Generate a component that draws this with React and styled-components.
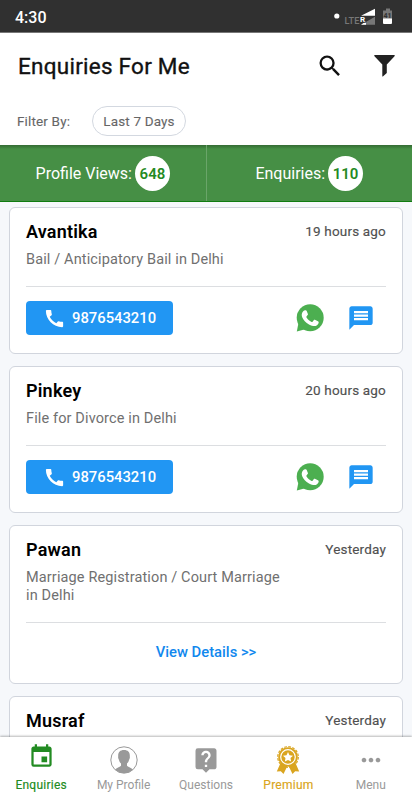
import React from 'react';
import styled, { createGlobalStyle } from 'styled-components';
import { MdCall, MdEvent, MdLiveHelp, MdMessage, MdMoreHoriz, MdSearch } from 'react-icons/md';

const GlobalStyle = createGlobalStyle`
  * { box-sizing: border-box; }
  body {
    margin: 0;
    font-family: Roboto, sans-serif;
    background: #f6f8fb;
  }
  svg { display: block; flex: none; }
`;

const Screen = styled.div`
  display: flex;
  flex-direction: column;
  width: 412px;
  height: 800px;
  overflow: hidden;
`;

const StatusBar = styled.div`
  flex: none;
  display: flex;
  align-items: center;
  justify-content: space-between;
  height: 33px;
  padding: 2px 18px 0 15px;
  background: #303030;
  border-bottom: 1px solid #777;
`;

const Clock = styled.span`
  color: #fff;
  font-size: 16px;
  font-weight: 500;
`;

const Header = styled.header`
  flex: none;
  height: 112px;
  background: #fff;
`;

const TitleRow = styled.div`
  display: flex;
  align-items: center;
  height: 66px;
  padding: 0 17px 0 18px;
`;

const Title = styled.h1`
  flex: 1;
  margin: 0;
  color: #111;
  font-size: 22.5px;
  font-weight: 400;
  letter-spacing: 0.25px;
  -webkit-text-stroke: 0.35px #111;
`;

const HeaderIcons = styled.div`
  display: flex;
  align-items: center;
  gap: 30px;
`;

const FilterRow = styled.div`
  display: flex;
  align-items: center;
  gap: 20px;
  height: 30px;
  margin-top: 7px;
  padding-left: 17px;
  color: #666;
  font-size: 13.5px;
  letter-spacing: 0.15px;
  -webkit-text-stroke: 0.1px #666;
`;

const FilterLabel = styled.span`
  width: 55px;
  white-space: nowrap;
`;

const Chip = styled.span`
  display: flex;
  align-items: center;
  justify-content: center;
  width: 94px;
  height: 30px;
  border: 1px solid #d3d8e0;
  border-radius: 15px;
`;

const Counters = styled.div`
  flex: none;
  display: flex;
  height: 57px;
  background: linear-gradient(#356b34, #3c7d3b 2px, #468f45 4px);
  border-bottom: 1px solid #107c10;
`;

const Counter = styled.div`
  flex: 1;
  display: flex;
  align-items: center;
  justify-content: center;
  gap: 3px;
  padding-top: 1px;
  color: #fff;
  font-size: 16px;

  &:first-child { border-right: 1px solid #6aa569; }
`;

const Count = styled.span`
  display: flex;
  align-items: center;
  justify-content: center;
  width: 35px;
  height: 35px;
  padding-top: 1px;
  border-radius: 50%;
  background: #fff;
  color: #248a24;
  font-size: 15px;
  font-weight: 600;
`;

const List = styled.main`
  flex: 1;
  display: flex;
  flex-direction: column;
  gap: 12px;
  min-height: 0;
  padding: 5px 9px 0;
  overflow: hidden;
`;

const Card = styled.article`
  flex: none;
  min-height: 147px;
  padding: 12px 16px 0;
  background: #fff;
  border: 1px solid #d1d5dd;
  border-radius: 6px;
`;

const CardHead = styled.div`
  display: flex;
  align-items: center;
  justify-content: space-between;
  height: 22px;
`;

const Name = styled.h2`
  margin: 0;
  color: #000;
  font-size: 18px;
  font-weight: 600;
  letter-spacing: 0.2px;
`;

const Time = styled.span`
  color: #505050;
  font-size: 13.5px;
  letter-spacing: 0.18px;
  -webkit-text-stroke: 0.15px #505050;
`;

const Topic = styled.p`
  width: 264px;
  margin: 9px 0 0;
  padding-bottom: 17.5px;
  color: #707070;
  font-size: 14.5px;
  letter-spacing: 0.13px;
  line-height: 17.5px;
`;

const Actions = styled.div`
  display: flex;
  align-items: center;
  height: ${(props) => (props.$details ? '61.5px' : '67px')};
  padding-bottom: ${(props) => (props.$details ? '2px' : '4px')};
  padding-right: ${(props) => (props.$details ? '0' : '11.5px')};
  justify-content: ${(props) => (props.$details ? 'center' : 'flex-start')};
  border-top: 1px solid #dcdee1;
`;

const CallButton = styled.button`
  display: flex;
  align-items: center;
  gap: 6px;
  width: 147px;
  height: 34px;
  margin-right: auto;
  padding: 0 0 0 17px;
  border: 0;
  border-radius: 4px;
  background: #2196f3;
  color: #fff;
  font-family: inherit;
  font-size: 14.8px;
  font-weight: 500;
`;

const Shortcuts = styled.div`
  display: flex;
  align-items: center;
  gap: 23px;
`;

const DetailsLink = styled.a`
  color: #1188ee;
  font-size: 14.8px;
  font-weight: 500;
`;

const TabBar = styled.nav`
  flex: none;
  display: flex;
  height: 63px;
  background: #fff;
  box-shadow: 0 -1px 2px rgba(0, 0, 0, 0.28);
  z-index: 1;
`;

const Tab = styled.div`
  flex: 1;
  display: flex;
  flex-direction: column;
  align-items: center;
  color: ${(props) => props.$color || '#999'};
  font-size: 12px;
  line-height: 16px;
  letter-spacing: ${(props) => (props.$color ? '0.25px' : '0')};
  -webkit-text-stroke: ${(props) => (props.$color ? '0.15px' : '0')};
`;

const TabIcon = styled.div`
  display: flex;
  align-items: center;
  justify-content: center;
  height: 40px;
  padding-top: ${(props) => (props.$raised ? 0 : 5)}px;
  padding-bottom: ${(props) => (props.$raised ? 1 : 0)}px;
`;

const enquiries = [
  { name: 'Avantika', topic: 'Bail / Anticipatory Bail in Delhi', time: '19 hours ago', phone: '9876543210' },
  { name: 'Pinkey', topic: 'File for Divorce in Delhi', time: '20 hours ago', phone: '9876543210' },
  { name: 'Pawan', topic: 'Marriage Registration / Court Marriage in Delhi', time: 'Yesterday', details: true },
  { name: 'Musraf', time: 'Yesterday' },
];

const StatusIcons = () => (
  <svg width="62" height="20" viewBox="0 0 62 20">
    <circle cx="4.8" cy="9" r="2.6" fill="#fff" />
    <text x="12.5" y="17.3" fontSize="9.2" fontWeight="500" letterSpacing="0.2" fill="#777">LTE</text>
    <path d="M29 8.7 43 1.7v7z" fill="#fff" />
    <path d="M29 17.7 43 9.7v8z" fill="#777" />
    <path d="M29 17.7 34 14.2v3.5z" fill="#fff" />
    <text x="28" y="15.2" fontSize="8" fontWeight="700" fill="#fff" stroke="#303030" strokeWidth="1.6" paintOrder="stroke">R</text>
    <path d="M54 1.5h4v2h2v9h-9v-9h3z" fill="#777" />
    <path d="M51 11.5h9V16q0 1-1 1h-7q-1 0-1-1z" fill="#fff" />
    <text x="51.6" y="11.3" fontSize="7" fontWeight="700" fill="#303030">41</text>
  </svg>
);

const FunnelIcon = () => (
  <svg width="21" height="22" viewBox="0 0 22 22" preserveAspectRatio="none" fill="#222">
    <path d="M0.5 0h21q.5.5 0 1.2L13.4 9.6V18L9.3 21.5q-.6.3-.6-.5V9.6L.5 1.2Q0 .5.5 0z" />
  </svg>
);

const WhatsappIcon = () => (
  <svg width="28" height="28" viewBox="0 0 28 28">
    <circle cx="14.2" cy="13.8" r="13.5" fill="#4caf50" />
    <path d="M2.5 19 .8 27.6l8.4-2.4z" fill="#4caf50" />
    <path
      d="M9.3 6.3c.7-.1 1.1 0 1.4.7l1.2 2.9c.2.5 0 .9-.3 1.2l-1.1 1.3c-.3.3-.3.6-.1.9 1.2 2.1 2.9 3.6 5.2 4.6.4.2.7.1 1-.2l1.3-1.6c.3-.4.6-.4 1-.3l3 1.4c.6.3.8.5.8.8 0 1.7-1 3.3-3 3.9-1.7.5-4-.1-6.7-1.4-3.2-1.6-5.7-4.6-6.8-7.2-.8-2-.6-4.3.8-5.9.7-.8 1.4-1.1 2.3-1.1z"
      fill="#fff"
    />
  </svg>
);

const ProfileIcon = () => (
  <svg width="28" height="28" viewBox="0 0 28 28">
    <circle cx="14" cy="14" r="13.2" fill="none" stroke="#999" strokeWidth="1" />
    <path
      d="M14 4c-4 0-6 2.4-5.8 6 0 1-.4 1.8.6 3.5.5 2 1.2 3 2.2 4v2.3c-.7 1.3-3.8 1.7-6 3.6A13 13 0 0 0 14 27a13 13 0 0 0 9-3.6c-2.2-1.9-5.3-2.3-6-3.6v-2.3c1-1 1.7-2 2.2-4 1-1.7.6-2.5.6-3.5C20 6.4 18 4 14 4z"
      fill="#999"
    />
  </svg>
);

const PremiumIcon = () => (
  <svg width="24" height="28" viewBox="0 0 24 28">
    <path d="M4.5 17 .8 25.5l4-.3L7.5 28 11.4 20h1.2l3.9 8 2.7-2.8 4 .3-3.7-8.5z" fill="#daa520" />
    <circle cx="12" cy="11" r="9.8" fill="#daa520" />
    <circle cx="12" cy="11" r="10.3" fill="none" stroke="#daa520" strokeWidth="1.2" strokeDasharray="2.7 1.345" />
    <circle cx="12" cy="11" r="7.3" fill="none" stroke="#fff" strokeWidth="1.2" />
    <path d="m12 6 1.5 3.2 3.5.5-2.5 2.4.6 3.5-3.1-1.7-3.1 1.7.6-3.5L7 9.7l3.5-.5z" fill="#fff" />
  </svg>
);

const EnquiryCard = ({ name, topic, time, phone, details }) => (
  <Card>
    <CardHead>
      <Name>{name}</Name>
      <Time>{time}</Time>
    </CardHead>
    {topic && <Topic>{topic}</Topic>}
    {phone && (
      <Actions>
        <CallButton>
          <MdCall size={23} />
          {phone}
        </CallButton>
        <Shortcuts>
          <WhatsappIcon />
          <MdMessage size={28} color="#2196f3" />
        </Shortcuts>
      </Actions>
    )}
    {details && (
      <Actions $details>
        <DetailsLink>View Details &gt;&gt;</DetailsLink>
      </Actions>
    )}
  </Card>
);

function App() {
  return (
    <Screen>
      <GlobalStyle />
      <StatusBar>
        <Clock>4:30</Clock>
        <StatusIcons />
      </StatusBar>

      <Header>
        <TitleRow>
          <Title>Enquiries For Me</Title>
          <HeaderIcons>
            <MdSearch size={28} color="#111" />
            <FunnelIcon />
          </HeaderIcons>
        </TitleRow>
        <FilterRow>
          <FilterLabel>Filter By:</FilterLabel>
          <Chip>Last 7 Days</Chip>
        </FilterRow>
      </Header>

      <Counters>
        <Counter>Profile Views: <Count>648</Count></Counter>
        <Counter>Enquiries: <Count>110</Count></Counter>
      </Counters>

      <List>
        {enquiries.map((item) => (
          <EnquiryCard key={item.name} {...item} />
        ))}
      </List>

      <TabBar>
        <Tab $color="#228b22">
          <TabIcon $raised><MdEvent size={27} /></TabIcon>
          Enquiries
        </Tab>
        <Tab>
          <TabIcon><ProfileIcon /></TabIcon>
          My Profile
        </Tab>
        <Tab>
          <TabIcon><MdLiveHelp size={28} /></TabIcon>
          Questions
        </Tab>
        <Tab $color="#daa520">
          <TabIcon><PremiumIcon /></TabIcon>
          Premium
        </Tab>
        <Tab>
          <TabIcon><MdMoreHoriz size={28} /></TabIcon>
          Menu
        </Tab>
      </TabBar>
    </Screen>
  );
}

export default App;
